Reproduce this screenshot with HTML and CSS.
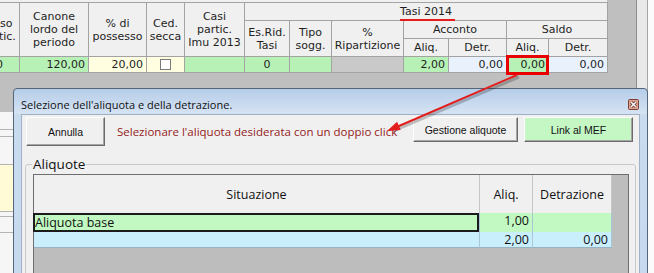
FILE: index.html
```html
<!DOCTYPE html>
<html lang="it">
<head>
  <meta charset="UTF-8">
  <title>Selezione aliquota Tasi</title>
  <link rel="stylesheet" href="styles.css">
</head>
<body>
  <div class="screen">
    <div class="main">
      <div class="topstrip"></div>
      <table class="sheet">
        <colgroup>
          <col style="width:64px"><col style="width:69px"><col style="width:58px"><col style="width:38px">
          <col style="width:60px"><col style="width:45px"><col style="width:42px"><col style="width:72px">
          <col style="width:45px"><col style="width:58px"><col style="width:42px"><col style="width:59px">
        </colgroup>
        <tr class="r1">
          <th rowspan="3">possesso<br>Ab. partic.</th>
          <th rowspan="3">Canone<br>lordo del<br>periodo</th>
          <th rowspan="3">% di<br>possesso</th>
          <th rowspan="3">Ced.<br>secca</th>
          <th rowspan="3">Casi<br>partic.<br>Imu 2013</th>
          <th colspan="7" class="tasi">Tasi 2014</th>
        </tr>
        <tr class="r2">
          <th rowspan="2">Es.Rid.<br>Tasi</th>
          <th rowspan="2">Tipo<br>sogg.</th>
          <th rowspan="2">%<br>Ripartizione</th>
          <th colspan="2">Acconto</th>
          <th colspan="2">Saldo</th>
        </tr>
        <tr class="r3">
          <th>Aliq.</th>
          <th>Detr.</th>
          <th>Aliq.</th>
          <th>Detr.</th>
        </tr>
        <tr class="data">
          <td class="g first">0</td>
          <td class="g">120,00</td>
          <td class="y">20,00</td>
          <td class="y mid"><span class="chk"></span></td>
          <td class="g"></td>
          <td class="g mid">0</td>
          <td class="g"></td>
          <td class="k"></td>
          <td class="g">2,00</td>
          <td class="b">0,00</td>
          <td class="g">0,00</td>
          <td class="b">0,00</td>
        </tr>
      </table>
      <div class="behind">
        <div class="bl bl1"></div>
        <div class="bl bl2"></div>
        <div class="bl bl3"></div>
        <div class="bl bl4"></div>
        <div class="bl bl5"></div>
        <div class="bl bl6"></div>
      </div>
    </div>
    <div class="track"></div>
    <div class="edge"></div>

    <div class="underline"></div>
    <div class="hilite"></div>

    <div class="dialog">
      <div class="titlebar">
        <span>Selezione dell'aliquota e della detrazione.</span>
        <svg class="close" width="11" height="11" viewBox="0 0 11 11">
          <rect x="0.5" y="0.5" width="10" height="10" rx="1" fill="#d9a08f" stroke="#7e3e33"/>
          <path d="M3.2 3.2 L7.8 7.8 M7.8 3.2 L3.2 7.8" stroke="#5b2a22" stroke-width="3"/>
          <path d="M3.2 3.2 L7.8 7.8 M7.8 3.2 L3.2 7.8" stroke="#fff" stroke-width="1.5"/>
        </svg>
      </div>
      <div class="client">
        <div class="toolbar">
          <button class="btn annulla">Annulla</button>
          <span class="hint">Selezionare l'aliquota desiderata con un doppio click</span>
          <button class="btn gestione">Gestione aliquote</button>
          <button class="btn mef">Link al MEF</button>
        </div>
        <fieldset class="group">
          <legend>Aliquote</legend>
          <div class="agrid">
            <div class="hd">Situazione</div>
            <div class="hd">Aliq.</div>
            <div class="hd">Detrazione</div>
            <div class="gap"></div>

            <div class="cell sel">Aliquota base</div>
            <div class="cell num green">1,00</div>
            <div class="cell num green"></div>
            <div class="gap"></div>

            <div class="cell cyan"></div>
            <div class="cell num cyan">2,00</div>
            <div class="cell num cyan">0,00</div>
            <div class="gap"></div>
          </div>
        </fieldset>
      </div>
    </div>

    <svg class="arrow" width="654" height="273" viewBox="0 0 654 273">
      <line x1="519" y1="77" x2="393" y2="131" stroke="#000" stroke-opacity="0.22" stroke-width="3"/>
      <line x1="517" y1="75" x2="392" y2="129" stroke="#e31c1c" stroke-width="2"/>
      <polygon points="387,131 400.7,130 397.1,121.8" fill="#e31c1c"/>
    </svg>
  </div>
</body>
</html>
```

FILE: styles.css
```css
body {
  margin: 0;
  font-family: "DejaVu Sans", Verdana, sans-serif;
}

.screen {
  position: relative;
  width: 654px;
  height: 273px;
  overflow: hidden;
  display: flex;
  background: #fafafa;
}

.main {
  width: 636px;
  flex: none;
  background: #bfbfbf;
}

.track {
  width: 10px;
  flex: none;
  background: #e9e9e9;
  border-left: 1px solid #8c8c8c;
  border-right: 1px solid #a5a5a5;
}

.edge {
  flex: 1;
  background: #fbfbfb;
}

.topstrip {
  height: 2px;
  width: 607px;
  background: #f0f0f0;
}

/* tabella di sfondo */
.sheet {
  border-collapse: collapse;
  table-layout: fixed;
  width: 652px;
  margin-left: -45px;
  font-size: 11px;
  color: #1e1e1e;
}

.sheet th {
  background: #f0f0f0;
  border: 1px solid #a3a3a3;
  font-weight: normal;
  line-height: 13px;
  padding: 0;
  text-align: center;
  white-space: nowrap;
  overflow: hidden;
}

.sheet .r1 { height: 18px; }
.sheet .r2 { height: 18px; }
.sheet .r3 { height: 18px; }
.sheet .data { height: 16px; }

.sheet td {
  border: 1px solid #a3a3a3;
  padding: 0 3px 0 0;
  text-align: right;
  line-height: 14px;
  white-space: nowrap;
  overflow: hidden;
}

.sheet td.mid { text-align: center; padding: 0; }
.sheet td.first { padding-right: 16px; }

.g { background: #b7f1b5; }
.y { background: #fffee0; }
.b { background: #e8f1fc; }
.k { background: #c9c9c9; }

.chk {
  display: inline-block;
  width: 11px;
  height: 11px;
  box-sizing: border-box;
  border: 1px solid #7a7a7a;
  background: #fff;
  vertical-align: middle;
}

.behind {
  margin-top: 39px;
  height: 162px;
  background: #f6f6f6;
}

.bl { border-bottom: 1px solid #b4b4b4; }
.bl1 { height: 17px; }
.bl2 { height: 6px; }
.bl3 { height: 27px; }
.bl4 { height: 46px; background: #fffbd6; }
.bl5 { height: 4px; }
.bl6 { height: 15px; }

/* annotazioni */
.underline {
  position: absolute;
  left: 400px;
  top: 19px;
  width: 55px;
  height: 2px;
  background: #e31c1c;
}

.hilite {
  position: absolute;
  left: 506px;
  top: 55px;
  width: 43px;
  height: 20px;
  box-sizing: border-box;
  border: 3px solid #e80000;
}

.arrow {
  position: absolute;
  left: 0;
  top: 0;
  pointer-events: none;
}

/* finestra di dialogo */
.dialog {
  position: absolute;
  left: 13px;
  top: 88px;
  width: 635px;
  height: 200px;
  box-sizing: border-box;
  border: 1px solid #56667a;
  border-radius: 4px 4px 0 0;
  background: linear-gradient(to bottom, #b5cce8 0, #d5e3f3 24px, #c9dbef 26px, #c6d9ee 100%);
  padding: 0 7px;
  display: flex;
  flex-direction: column;
  font-family: "Open Sans", sans-serif;
}

.titlebar {
  height: 25px;
  flex: none;
  box-sizing: border-box;
  display: flex;
  align-items: flex-end;
  padding-bottom: 2px;
  font-size: 11px;
  line-height: 15px;
  color: #111;
}

.close {
  margin-left: auto;
  margin-right: 1px;
  margin-bottom: 2px;
}

.client {
  flex: 1;
  background: #f0f0f0;
  border: 1px solid #9fb1c6;
  border-bottom: 0;
}

.toolbar {
  display: flex;
  align-items: flex-start;
  height: 31px;
  box-sizing: border-box;
  padding: 2px 6px 0 4px;
}

.btn {
  font-family: "Liberation Sans", Arial, sans-serif;
  font-size: 10.5px;
  color: #111;
  background: #f0f0f0;
  border: 1px solid;
  border-color: #fdfdfd #6b6b6b #6b6b6b #fdfdfd;
  box-shadow: inset -1px -1px 0 #a6a6a6;
  padding: 0;
  margin: 0;
}

.annulla { width: 79px; height: 29px; }
.gestione { width: 105px; height: 25px; margin-left: auto; }
.mef { width: 109px; height: 25px; margin-left: 6px; background: #c4f7c4; }

.hint {
  align-self: center;
  margin-left: 12px;
  font-size: 11.5px;
  color: #951b1b;
}

.group {
  min-width: 0;
  margin: 9px 3px 0 3px;
  padding: 0 6px 20px 6px;
  border: 1px solid #c9c9c9;
  border-radius: 3px;
}

.group legend {
  padding: 0 1px;
  font-size: 13.5px;
  line-height: 18px;
  color: #111;
}

.agrid {
  width: 596px;
  height: 110px;
  margin: 1px 0 0 1px;
  box-sizing: border-box;
  border: 1px solid #6e6e6e;
  background: #bdbdbd;
  display: grid;
  grid-template-columns: 446px 53px 79px 1fr;
  grid-template-rows: 38px 19px 16px;
  align-content: start;
  font-size: 12.5px;
  color: #111;
}

.hd {
  background: #f0f0f0;
  border-right: 1px solid #c6c6c6;
  display: flex;
  align-items: center;
  justify-content: center;
}

.cell {
  line-height: 16px;
  border-right: 1px solid #a9c6d6;
  white-space: nowrap;
}

.num {
  text-align: right;
  padding-right: 3px;
}

.green { background: #c2f8c2; }
.cyan { background: #c9effd; border-bottom: 1px solid #98b2c2; }

.sel {
  background: #c2f8c2;
  box-shadow: inset 0 0 0 2px #1c1c1c;
  padding-left: 2px;
  line-height: 19px;
  margin-left: -1px;
}
```
